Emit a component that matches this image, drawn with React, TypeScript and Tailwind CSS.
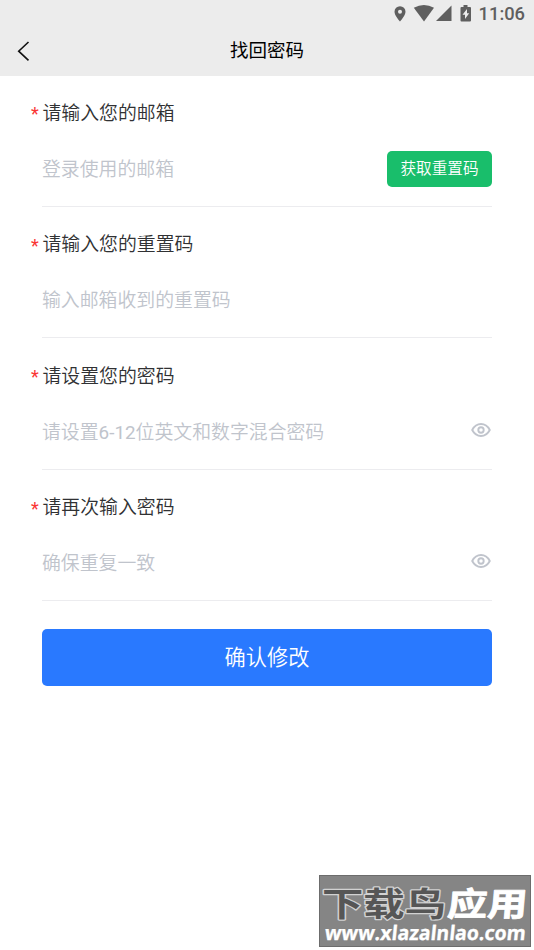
import React from "react";

const FONT = "font-['Roboto','Noto_Sans_CJK_SC',sans-serif]";

function StatusBar() {
  return (
    <div className="flex h-7 items-center justify-end pr-[9px] text-[#5f5f5f]">
      <svg width="82" height="20" viewBox="0 0 82 20" fill="currentColor" className="mr-[4px]">
        <path
          fillRule="evenodd"
          d="M6 5.2a5.5 5.5 0 0 0-5.5 5.5c0 3.8 5.5 9.800 5.500 9.800s5.500-6 5.500-9.800A5.500 5.500 0 0 0 6 5.200Zm0 3.500a2 2 0 1 1 0 4 2 2 0 0 1 0-4Z"
          transform="translate(1 -3)"
        />
        <path d="M20 4.200Q30.200-1.400 40.200 4.200L30.200 18Z" transform="translate(0.800 -0.500)" />
        <path d="M58.500 1.500V17H43Z" />
        <path
          fillRule="evenodd"
          d="M70.500 3V1h4v2H77a1 1 0 0 1 1 1V16.500a1 1 0 0 1-1 1H68.500a1 1 0 0 1-1-1V4a1 1 0 0 1 1-1ZM74 5l-4.500 5.700h2.500V15l4.200-5.700h-2.200Z"
        />
      </svg>
      <span className="text-[18.300px] font-medium leading-7">11:06</span>
    </div>
  );
}

function EyeIcon() {
  return (
    <svg width="20" height="16" viewBox="0 0 20 16" fill="none" stroke="#c0c4cc" strokeWidth="1.900" className="mr-[1px] -mt-[4px]">
      <path d="M1.200 8C3.300 4 6.300 2 10 2s6.700 2 8.800 6c-2.100 4-5.100 6-8.800 6S3.300 12 1.200 8Z" strokeLinejoin="round" />
      <circle cx="10" cy="8" r="2.700" />
    </svg>
  );
}

type FieldProps = { label: string; placeholder: React.ReactNode; action?: React.ReactNode };

function Field({ label, placeholder, action }: FieldProps) {
  return (
    <div className="flex h-[131.400px] flex-col border-b border-[#ececef] pt-[23.400px] font-[350]">
      <div className="-ml-[11px] flex h-[30px] items-center text-[18.860px] text-[#303133]">
        <span className="w-[11.500px] text-[18px] font-normal text-[#fa3534]">*</span>
        <span>{label}</span>
      </div>
      <div className="mt-[22px] flex h-[36px] items-center justify-between">
        <span className="whitespace-nowrap pt-[2px] text-[18.860px] text-[#c0c4cc]">{placeholder}</span>
        {action}
      </div>
    </div>
  );
}

function Watermark() {
  return (
    <svg width="212" height="72" viewBox="0 0 212 72" className="absolute left-[319px] top-[875px]">
      <rect x="0.500" y="0.500" width="211" height="71" fill="#858585" stroke="#6c6c6c" />
      <g
        className="font-['Noto_Sans_CJK_SC',sans-serif]"
        fontSize="33"
        fontWeight="700"
        strokeLinejoin="round"
        style={{ paintOrder: "stroke" }}
      >
        <text x="3" y="41" textLength="124" lengthAdjust="spacingAndGlyphs" fill="#565656" stroke="#d2d2d2" strokeWidth="2.500">
          下载鸟
        </text>
        <text x="131" y="41" textLength="80" lengthAdjust="spacingAndGlyphs" fill="#fff" stroke="#fff" strokeWidth="0.800" transform="skewX(-5)">
          应用
        </text>
      </g>
      <text
        x="12"
        y="65"
        textLength="201"
        lengthAdjust="spacingAndGlyphs"
        className="font-['Open_Sans',sans-serif]"
        fontSize="20"
        fontWeight="700"
        fill="#fff"
        stroke="#fff"
        strokeWidth="0.300"
        transform="skewX(-6)"
      >
        www.xlazalnlao.com
      </text>
    </svg>
  );
}

export default function App() {
  return (
    <div className={`relative h-[950px] w-[534px] overflow-hidden bg-white ${FONT}`}>
      <header className="h-[75.600px] bg-[#ececec]">
        <StatusBar />
        <div className="grid h-[46px] grid-cols-[60px_1fr_60px] items-center">
          <svg width="14" height="20" viewBox="0 0 14 20" fill="none" stroke="#111" strokeWidth="1.600" className="ml-[17px]">
            <path d="M11.500 1L1.700 10.200L11.500 19.300" />
          </svg>
          <h1 className="pt-[1px] text-center text-[18.500px] font-normal text-black">找回密码</h1>
        </div>
      </header>
      <main className="px-[42px]">
        <Field
          label="请输入您的邮箱"
          placeholder="登录使用的邮箱"
          action={
            <button className="h-[36px] w-[105px] rounded-[5px] bg-[#19be6b] pt-[1px] text-[15.600px] font-[350] text-white">
              获取重置码
            </button>
          }
        />
        <Field label="请输入您的重置码" placeholder="输入邮箱收到的重置码" />
        <Field
          label="请设置您的密码"
          placeholder={
            <>
              请设置<span className="font-normal">6-12</span>位英文和数字混合密码
            </>
          }
          action={<EyeIcon />}
        />
        <Field label="请再次输入密码" placeholder="确保重复一致" action={<EyeIcon />} />
        <button className="mt-[28px] h-[57px] w-full rounded-[5px] bg-[#2979ff] text-[21.200px] font-[350] text-white">确认修改</button>
      </main>
      <Watermark />
    </div>
  );
}
